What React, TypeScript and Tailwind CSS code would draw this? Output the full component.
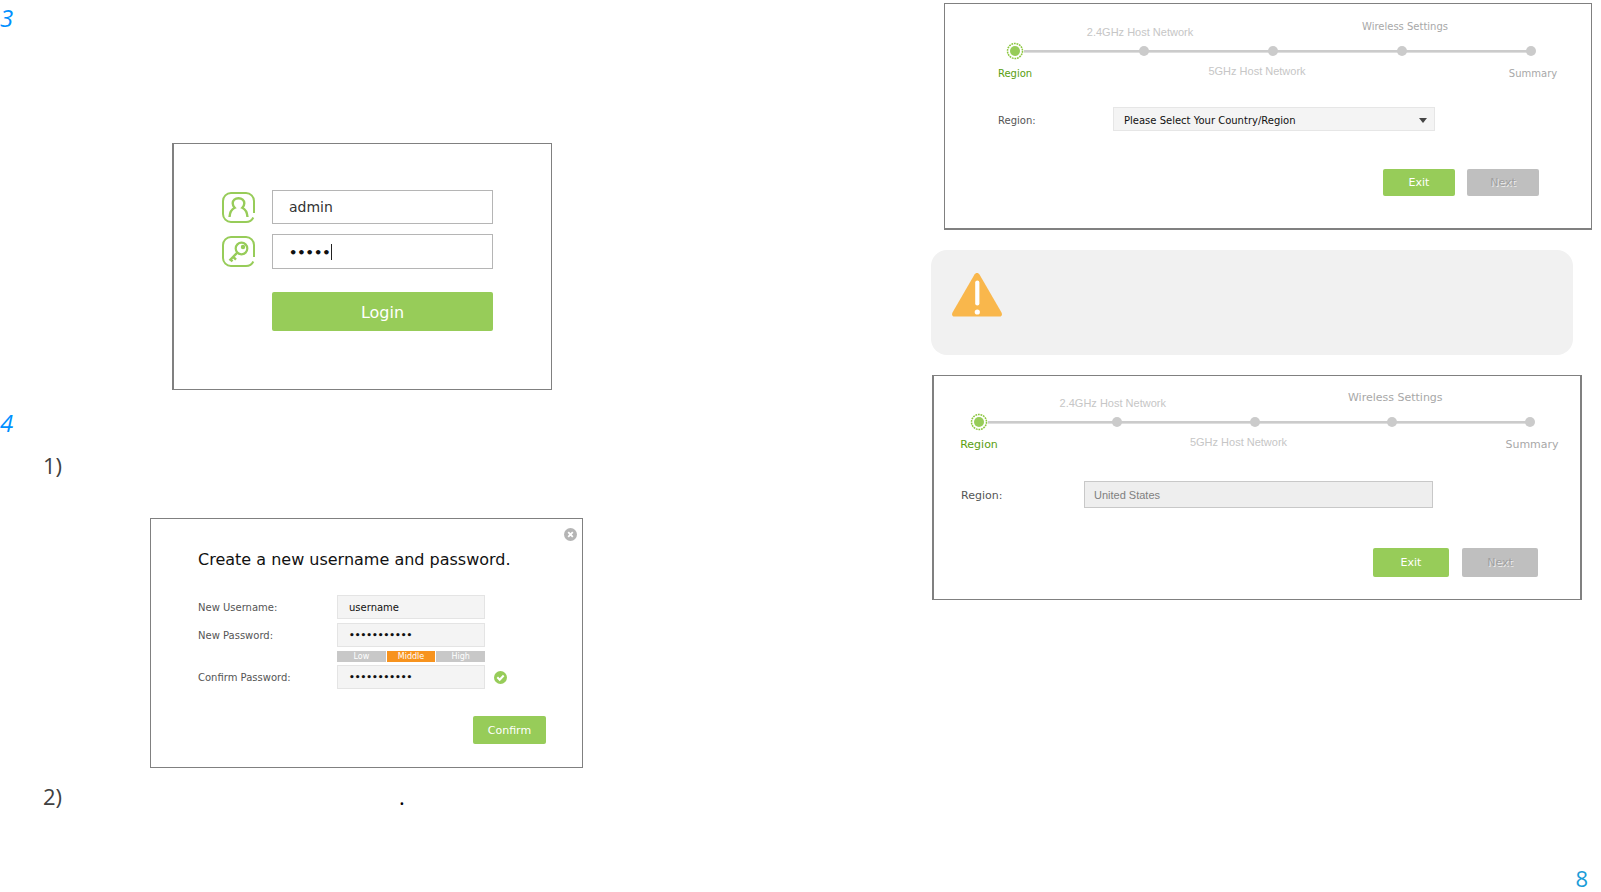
import type { ReactNode } from "react";

const steps = [
  { label: "Region", below: true, active: true, className: "pt-[7px]" },
  { label: "2.4GHz Host Network", below: false, arial: true, className: "pt-1.5 pr-2" },
  { label: "5GHz Host Network", below: true, arial: true, className: "pt-1 pr-8" },
  { label: "Wireless Settings", below: false, className: "pt-px pl-1.5" },
  { label: "Summary", below: true, className: "pt-[7px] pl-1" },
];

const Stepper = ({ className, textClass }: { className: string; textClass: string }) => (
  <div className={className}>
    <div className="relative">
      <div className="absolute inset-x-0 top-8 h-[3px] border-b border-[#dedede] bg-[#cbcbcb]" />
      <ol className="flex justify-between">
        {steps.map((step) => {
          const color = step.active ? "text-[#5a9e0f]" : step.arial ? "text-[#c6c6c6]" : "text-[#a8a8a8]";
          const font = step.arial ? "font-['Liberation_Sans',sans-serif] text-[11px]" : textClass;
          const label = (
            <span className={`whitespace-nowrap leading-4 ${font} ${color} ${step.className}`}>{step.label}</span>
          );
          return (
            <li key={step.label} className="relative flex w-0 flex-col items-center">
              <div className="flex h-[25px] items-start">{!step.below && label}</div>
              <div className="flex h-4 items-center justify-center">
                {step.active ? (
                  <svg width="18" height="18" viewBox="0 0 18 18" className="shrink-0">
                    <circle cx="9" cy="9" r="9" fill="#fff" />
                    <circle cx="9" cy="9" r="5" fill="#97cc59" />
                    <circle
                      cx="9"
                      cy="9"
                      r="7.500"
                      fill="none"
                      stroke="#8cc63f"
                      strokeWidth="1.500"
                      strokeDasharray="1.800 0.818"
                    />
                  </svg>
                ) : (
                  <span className="size-[10px] shrink-0 rounded-full bg-[#cbcbcb]" />
                )}
              </div>
              <div className="flex h-[23px] items-start">{step.below && label}</div>
            </li>
          );
        })}
      </ol>
    </div>
  </div>
);

const Button = ({
  children,
  className,
  disabled,
}: {
  children: ReactNode;
  className: string;
  disabled?: boolean;
}) => (
  <button
    type="button"
    disabled={disabled}
    className={`flex items-center justify-center rounded-xs pt-0.5 ${
      disabled ? "bg-[#bfbfbf] text-[#a0a0a0] [text-shadow:1px_1px_0_#ececec]" : "bg-[#97cc59] text-white"
    } ${className}`}
  >
    {children}
  </button>
);

const IconFrame = ({ children }: { children: ReactNode }) => (
  <svg width="33" height="31" viewBox="0 0 33 31" fill="none" stroke="#97cc59" strokeWidth="2" className="shrink-0">
    <path d="M32 21V9a8 8 0 0 0-8-8H9a8 8 0 0 0-8 8v13a8 8 0 0 0 8 8h15c3.400 0 6-1.600 7.300-4.500" />
    {children}
  </svg>
);

const LoginCard = () => (
  <form className="ml-[172px] w-[380px] max-w-full border border-l-2 border-[#808080] pt-[46px] pr-[58px] pb-[58px] pl-12">
    <div className="flex flex-col gap-2.5">
      <div className="flex items-center gap-[17px]">
        <label htmlFor="login-user" aria-label="Username">
          <IconFrame>
            <path
              strokeWidth="2.400"
              d="M7.500 25c.3-4.500 1.800-7.500 5.200-9.200-1.300-1.300-2-2.700-2-4.500 0-3 2.400-5 5.800-5s5.800 2 5.800 5c0 1.800-.7 3.200-2 4.500 3.400 1.700 4.900 4.700 5.200 9.200"
            />
          </IconFrame>
        </label>
        <input
          id="login-user"
          type="text"
          defaultValue="admin"
          className="h-[34px] w-full min-w-0 border border-[#b5b5b5] px-4 text-[14px] text-[#333]"
        />
      </div>
      <div className="flex items-center gap-[17px]">
        <label htmlFor="login-pass" aria-label="Password">
          <IconFrame>
            <circle cx="19.500" cy="12.500" r="5.800" strokeWidth="2.200" />
            <circle cx="21" cy="11" r="2.200" fill="#97cc59" stroke="none" />
            <path strokeWidth="2.400" d="M15.300 16.700 7.500 24.500M11.200 20.800l2.800 2.800M8.300 23.200l2.200 2.200" />
          </IconFrame>
        </label>
        <div className="relative w-full">
          <input
            id="login-pass"
            type="password"
            defaultValue="admin"
            className="block h-[35px] w-full border border-[#b5b5b5] px-4 pt-0.5 text-[13px] font-bold text-[#111]"
          />
          <span className="absolute top-2.5 left-[59px] h-4 w-px bg-[#222]" />
        </div>
      </div>
    </div>
    <Button className="mt-[23px] ml-[50px] h-[39px] w-[221px] text-[16px]">Login</Button>
  </form>
);

const fieldClass = "h-6 w-[148px] border border-[#e4e4e4] bg-[#f4f4f4] px-[11px] text-[#111]";
const labelClass = "w-[139px] pt-px text-[10px] text-[#555]";

const CreateAccountCard = () => (
  <form className="ml-[150px] w-[433px] max-w-full border border-[#808080] pt-[9px] pb-[23px] pl-[47px]">
    <div className="flex justify-end pr-[5px]">
      <button type="button" aria-label="Close">
        <svg width="13" height="13" viewBox="0 0 13 13">
          <circle cx="6.500" cy="6.500" r="6.500" fill="#b5b5b5" />
          <path d="m4.200 4.200 4.600 4.600m0-4.600L4.200 8.800" stroke="#fff" strokeWidth="1.800" />
        </svg>
      </button>
    </div>
    <h2 className="mt-[7px] text-[16px] leading-6 text-[#111]">Create a new username and password.</h2>
    <div className="mt-[23px] flex items-center">
      <label htmlFor="new-user" className={labelClass}>New Username:</label>
      <input id="new-user" type="text" defaultValue="username" className={`text-[10px] ${fieldClass}`} />
    </div>
    <div className="mt-1 flex items-center">
      <label htmlFor="new-pass" className={labelClass}>New Password:</label>
      <input
        id="new-pass"
        type="password"
        defaultValue="password123"
        className={`text-[9px] font-bold ${fieldClass}`}
      />
    </div>
    <div className="mt-1 ml-[139px] grid h-[11px] w-[148px] grid-cols-3 gap-px text-center text-[8px] leading-[11px] text-white">
      <span className="bg-[#c8c8c8]">Low</span>
      <span className="bg-[#f7931e]">Middle</span>
      <span className="bg-[#c8c8c8]">High</span>
    </div>
    <div className="mt-[3px] flex items-center">
      <label htmlFor="confirm-pass" className={labelClass}>Confirm Password:</label>
      <input
        id="confirm-pass"
        type="password"
        defaultValue="password123"
        className={`text-[9px] font-bold ${fieldClass}`}
      />
      <svg width="13" height="13" viewBox="0 0 13 13" className="ml-[9px]">
        <circle cx="6.500" cy="6.500" r="6.500" fill="#97cc59" />
        <path d="m3.300 6.300 2.400 2.500 4-4.300" fill="none" stroke="#fff" strokeWidth="2" />
      </svg>
    </div>
    <div className="mt-[27px] flex justify-end pr-9">
      <Button className="h-7 w-[73px] text-[11px]">Confirm</Button>
    </div>
  </form>
);

const SelectRegionCard = () => (
  <section className="mt-[3px] mr-[9px] ml-[13px] border border-b-2 border-[#808080] pt-3.5 pb-8">
    <Stepper className="pr-[60px] pl-[70px]" textClass="text-[10px]" />
    <div className="mt-[25px] flex items-center pr-[156px] pl-[53px]">
      <label htmlFor="region-select" className="w-[115px] shrink-0 pt-0.5 text-[10px] text-[#555]">Region:</label>
      <div className="relative flex-1">
        <select
          id="region-select"
          className="block h-6 w-full appearance-none border border-[#e6e6e6] bg-[#f4f4f4] px-2.5 pt-0.5 text-[10px] text-[#111]"
        >
          <option>Please Select Your Country/Region</option>
        </select>
        <svg width="8" height="5" viewBox="0 0 8 5" className="pointer-events-none absolute top-[11px] right-2">
          <path d="M0 0h8L4 5z" fill="#444" />
        </svg>
      </div>
    </div>
    <div className="mt-[38px] flex justify-end gap-3 pr-[52px]">
      <Button className="h-[27px] w-[72px] text-[11px]">Exit</Button>
      <Button disabled className="h-[27px] w-[72px] text-[11px]">Next</Button>
    </div>
  </section>
);

const FixedRegionCard = () => (
  <section className="mt-5 mr-[19px] ml-px border border-x-2 border-[#808080] pt-[13px] pb-[22px]">
    <Stepper className="pr-[50px] pl-[45px]" textClass="text-[11px]" />
    <div className="mt-7 flex items-center pr-[147px] pl-[27px]">
      <label htmlFor="region-fixed" className="w-[123px] shrink-0 pt-[3px] text-[11px] text-[#555]">Region:</label>
      <input
        id="region-fixed"
        type="text"
        readOnly
        value="United States"
        className="h-[27px] min-w-0 flex-1 border border-[#c8c8c8] bg-[#eee] px-[9px] font-['Liberation_Sans',sans-serif] text-[11px] text-[#808080]"
      />
    </div>
    <div className="mt-10 flex justify-end gap-[13px] pr-[42px]">
      <Button className="h-[29px] w-[76px] text-[11px]">Exit</Button>
      <Button disabled className="h-[29px] w-[76px] text-[11px]">Next</Button>
    </div>
  </section>
);

const Notice = () => (
  <div className="mt-5 mr-7 h-[105px] rounded-2xl bg-[#f1f1f1] pt-[23px] pl-[21px]">
    <svg width="50" height="44" viewBox="0 0 50 44">
      <path d="M22.500 1.500c1.200-2 3.800-2 5 0l22 38c1 2 .2 4-2 4h-45c-2.200 0-3-2-2-4z" fill="#f9b74c" />
      <path d="M25.300 9.500v21" stroke="#fff" strokeWidth="4.200" strokeLinecap="round" />
      <circle cx="25.300" cy="39" r="2.600" fill="#fff" />
    </svg>
  </div>
);

const markerClass = "font-['Open_Sans',sans-serif] text-[24px] leading-9 text-[#0090ff] italic";
const subMarkerClass = "pl-[43px] font-['Open_Sans',sans-serif] text-[22px] leading-9 text-[#404040]";

const App = () => {
  return (
    <main className="grid min-h-screen grid-cols-[931fr_670fr] bg-white font-['DejaVu_Sans',sans-serif]">
      <div>
        <p className={markerClass}>3</p>
        <div className="mt-[107px]">
          <LoginCard />
        </div>
        <p className={`mt-[15px] ${markerClass}`}>4</p>
        <p className={`mt-1.5 ${subMarkerClass}`}>1)</p>
        <div className="mt-[35px]">
          <CreateAccountCard />
        </div>
        <p className={`mt-2.5 flex ${subMarkerClass}`}>
          <span className="w-[356px]">2)</span>
          <span className="text-black">.</span>
        </p>
      </div>
      <div className="flex flex-col">
        <SelectRegionCard />
        <Notice />
        <FixedRegionCard />
        <p className="mt-auto mr-[13px] self-end font-['Open_Sans',sans-serif] text-[22px] leading-7 text-[#1a9cd8]">8</p>
      </div>
    </main>
  );
};

export default App;
